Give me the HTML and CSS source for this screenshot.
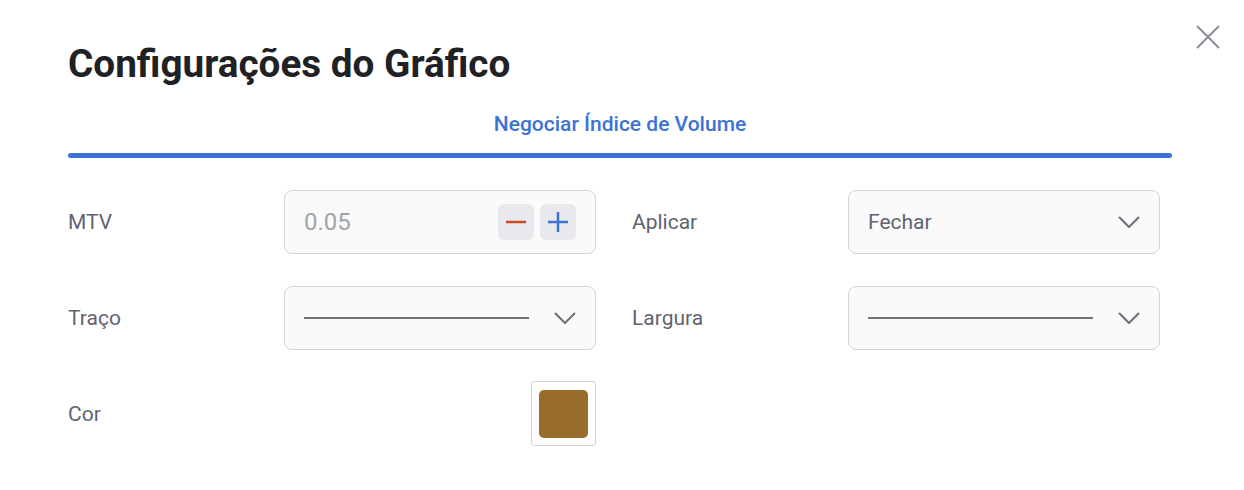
FILE: index.html
```html
<!DOCTYPE html>
<html lang="pt">
<head>
<meta charset="utf-8">
<title>Configurações do Gráfico</title>
<link rel="stylesheet" href="styles.css">
</head>
<body>
<div class="dialog">
  <button class="close" aria-label="Fechar">
    <svg width="24" height="24" viewBox="0 0 24 24"><path d="M1 1 L23 23 M23 1 L1 23" stroke="#8a8e98" stroke-width="2" fill="none"/></svg>
  </button>
  <h1 class="title">Configurações do Gráfico</h1>
  <div class="tabs">
    <div class="tab">Negociar Índice de Volume</div>
    <div class="tab-bar"></div>
  </div>
  <div class="form">
    <div class="row">
      <div class="group">
        <div class="label">MTV</div>
        <div class="control">
          <span class="value muted">0.05</span>
          <div class="stepper">
            <button class="step"><svg width="20" height="20" viewBox="0 0 20 20"><path d="M0 10 H20" stroke="#d0472a" stroke-width="2.5"/></svg></button>
            <button class="step"><svg width="20" height="20" viewBox="0 0 20 20"><path d="M0 10 H20 M10 0 V20" stroke="#3c72d3" stroke-width="2.5"/></svg></button>
          </div>
        </div>
      </div>
      <div class="group">
        <div class="label">Aplicar</div>
        <div class="control">
          <span class="value">Fechar</span>
          <svg class="chev" width="22" height="12" viewBox="0 0 22 12"><path d="M1 1 L11 11 L21 1" stroke="#6b6f79" stroke-width="2" fill="none"/></svg>
        </div>
      </div>
    </div>
    <div class="row">
      <div class="group">
        <div class="label">Traço</div>
        <div class="control">
          <span class="line"></span>
          <svg class="chev" width="22" height="12" viewBox="0 0 22 12"><path d="M1 1 L11 11 L21 1" stroke="#6b6f79" stroke-width="2" fill="none"/></svg>
        </div>
      </div>
      <div class="group">
        <div class="label">Largura</div>
        <div class="control">
          <span class="line"></span>
          <svg class="chev" width="22" height="12" viewBox="0 0 22 12"><path d="M1 1 L11 11 L21 1" stroke="#6b6f79" stroke-width="2" fill="none"/></svg>
        </div>
      </div>
    </div>
    <div class="row row-color">
      <div class="group">
        <div class="label">Cor</div>
        <div class="color-cell">
          <div class="swatch-box"><div class="swatch"></div></div>
        </div>
      </div>
    </div>
  </div>
</div>
</body>
</html>
```

FILE: styles.css
```css
* { box-sizing: border-box; }
html, body { margin: 0; background: #ffffff; }
body { font-family: Roboto, "Noto Sans", Arial, sans-serif; color: #202124; }
.dialog { position: relative; width: 1244px; height: 490px; padding: 42px 72px 0 68px; }
.close { position: absolute; top: 25px; right: 24px; width: 24px; height: 24px; padding: 0; border: 0; background: none; display: block; }
.close svg { display: block; }
.title { margin: 0; font-size: 38.7px; line-height: 44px; font-weight: 700; color: #202124; }
.tabs { margin-top: 26px; }
.tab { text-align: center; font-size: 21px; line-height: 24px; font-weight: 500; color: #3c72d3; padding-bottom: 17px; }
.tab-bar { height: 5px; border-radius: 3px; background: #3c72d3; }
.form { margin-top: 32px; display: flex; flex-direction: column; gap: 32px; }
.row { display: flex; gap: 36px; height: 64px; }
.row-color { height: 65px; margin-top: -1px; }
.group { display: flex; align-items: center; width: 528px; }
.label { width: 216px; font-size: 21px; font-weight: 400; color: #5f6370; }
.control { width: 312px; height: 64px; border: 1px solid #d3d4d8; border-radius: 8px; background: #fafafa; display: flex; align-items: center; padding: 0 19px 0 19px; }
.value { flex: 1; font-size: 21px; font-weight: 400; color: #5f6370; }
.value.muted { font-size: 24px; font-weight: 400; color: #a0a4ab; }
.stepper { display: flex; gap: 6px; }
.step { width: 36px; height: 36px; border: 0; border-radius: 6px; background: #e8e9ec; display: flex; align-items: center; justify-content: center; padding: 0; }
.step svg { display: block; }
.chev { display: block; margin-left: 25px; }
.line { flex: 1; height: 2px; background: #757575; }
.color-cell { width: 312px; display: flex; justify-content: flex-end; }
.swatch-box { width: 65px; height: 65px; border: 1px solid #d3d4d8; border-radius: 3px; padding: 8px 7px; background: #fff; }
.swatch { width: 49px; height: 48px; border-radius: 5px; background: #976c2d; }
```
